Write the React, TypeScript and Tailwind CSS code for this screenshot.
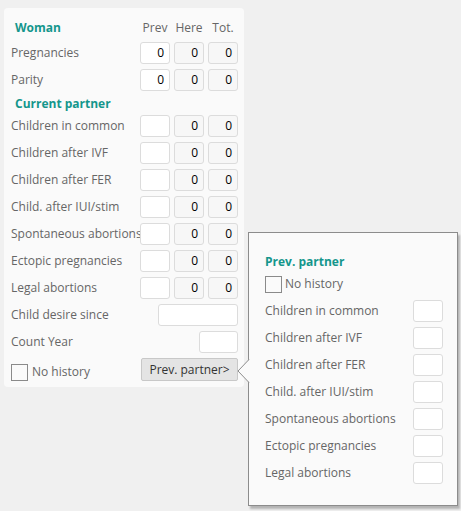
import React from 'react';

const font = { fontFamily: '"Open Sans", "Liberation Sans", sans-serif' };

const Box: React.FC<{ value?: string; w?: string }> = ({ value, w = 'w-[30px]' }) => (
  <div
    className={`${w} h-[22px] shrink-0 rounded-[3px] border border-[#dcdcdc] bg-white flex items-center justify-end pr-[5px] text-[12px] text-black`}
  >
    {value}
  </div>
);

const Check: React.FC = () => (
  <div className="w-[17px] h-[17px] shrink-0 border border-[#8a8a8a] bg-[#fafafa]" />
);

const TripleRow: React.FC<{ label: string; prev?: string }> = ({ label, prev }) => (
  <div className="flex items-center h-[22px]">
    <span className="flex-1 min-w-0 whitespace-nowrap text-[12px] text-[#666]">{label}</span>
    <div className="flex shrink-0 gap-[4px]">
      <Box value={prev} />
      <div className="w-[30px] h-[22px] rounded-[3px] border border-[#dcdcdc] bg-[#f7f7f7] flex items-center justify-end pr-[5px] text-[12px] text-black">0</div>
      <div className="w-[30px] h-[22px] rounded-[3px] border border-[#dcdcdc] bg-[#f7f7f7] flex items-center justify-end pr-[5px] text-[12px] text-black">0</div>
    </div>
  </div>
);

const partnerRows = [
  'Children in common',
  'Children after IVF',
  'Children after FER',
  'Child. after IUI/stim',
  'Spontaneous abortions',
  'Ectopic pregnancies',
  'Legal abortions',
];

export default function App() {
  return (
    <div className="relative h-[511px] w-[461px] bg-[#f0f0f0] pt-[8px] pl-[4px]" style={font}>
      <div className="w-[240px] rounded-[4px] bg-[#fafafa] pl-[7px] pr-[6px] pt-[10px] pb-[6px]">
        <div className="flex items-center h-[20px]">
          <span className="flex-1 pl-[4px] text-[12px] font-bold text-[#14968c]">Woman</span>
          <div className="flex gap-[4px] text-[12px] text-[#666]">
            <span className="w-[30px] text-center">Prev</span>
            <span className="w-[30px] text-center">Here</span>
            <span className="w-[30px] text-center">Tot.</span>
          </div>
        </div>
        <div className="mt-[4px] flex flex-col gap-[5px]">
          <TripleRow label="Pregnancies" prev="0" />
          <TripleRow label="Parity" prev="0" />
        </div>
        <div className="h-[24px] flex items-center pl-[4px] pt-[2px] text-[12px] font-bold text-[#14968c]">Current partner</div>
        <div className="flex flex-col gap-[5px]">
          {partnerRows.map((r) => (
            <TripleRow key={r} label={r} />
          ))}
          <div className="flex items-center h-[22px]">
            <span className="flex-1 text-[12px] text-[#666]">Child desire since</span>
            <Box w="w-[80px]" />
          </div>
          <div className="flex items-center h-[22px]">
            <span className="flex-1 text-[12px] text-[#666]">Count Year</span>
            <Box w="w-[39px]" />
          </div>
          <div className="flex items-center h-[23px]">
            <div className="flex flex-1 items-center gap-[4px] pt-[5px]">
              <Check />
              <span className="text-[12px] text-[#666]">No history</span>
            </div>
            <div className="w-[97px] h-[23px] rounded-[2px] border border-[#c8c8c8] bg-[#e4e4e4] flex items-center justify-center text-[12px] text-[#333]">
              Prev. partner&gt;
            </div>
          </div>
        </div>
      </div>

      {/* popover */}
      <div className="absolute left-[248px] top-[232px] w-[210px] h-[274px] border border-[#8c8c8c] bg-[#fafafa] shadow-[2px_3px_2px_rgba(0,0,0,0.25)] pl-[16px] pr-[14px] pt-[21px]">
        <svg className="absolute left-[-12px] top-[126px]" width="13" height="24" viewBox="0 0 13 24">
          <polygon points="12.5,0 1,12 12.5,24" fill="#fafafa" />
          <polyline points="12,0.5 1,12 12,23.5" fill="none" stroke="#8c8c8c" strokeWidth="1" />
        </svg>
        <div className="text-[12px] font-bold text-[#14968c] leading-[16px]">Prev. partner</div>
        <div className="mt-[5px] flex items-center gap-[3px]">
          <Check />
          <span className="text-[12px] text-[#666]">No history</span>
        </div>
        <div className="mt-[7px] flex flex-col gap-[5px]">
          {partnerRows.map((r) => (
            <div key={r} className="flex items-center h-[22px]">
              <span className="flex-1 text-[12px] text-[#666]">{r}</span>
              <Box />
            </div>
          ))}
        </div>
      </div>
    </div>
  );
}
